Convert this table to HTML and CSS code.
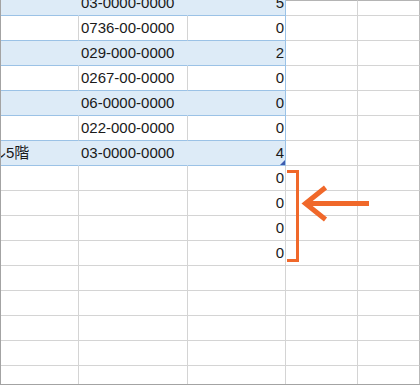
FILE: index.html
```html
<!DOCTYPE html>
<html lang="ja">
<head>
<meta charset="utf-8">
<title>Sheet</title>
<link rel="stylesheet" href="styles.css">
</head>
<body>
<div class="sheet">
  <!-- row 0 (partial, table band) -->
  <div class="c a t band first"></div>
  <div class="c b t band first"><span class="txt">03-0000-0000</span></div>
  <div class="c n t band first"><span class="txt">5</span></div>
  <div class="c d first top"></div>
  <div class="c e first top"></div>
  <!-- row 1 -->
  <div class="c a t"></div>
  <div class="c b t">0736-00-0000</div>
  <div class="c n t">0</div>
  <div class="c d"></div>
  <div class="c e"></div>
  <!-- row 2 -->
  <div class="c a t band"></div>
  <div class="c b t band">029-000-0000</div>
  <div class="c n t band">2</div>
  <div class="c d"></div>
  <div class="c e"></div>
  <!-- row 3 -->
  <div class="c a t"></div>
  <div class="c b t">0267-00-0000</div>
  <div class="c n t">0</div>
  <div class="c d"></div>
  <div class="c e"></div>
  <!-- row 4 -->
  <div class="c a t band"></div>
  <div class="c b t band">06-0000-0000</div>
  <div class="c n t band">0</div>
  <div class="c d"></div>
  <div class="c e"></div>
  <!-- row 5 -->
  <div class="c a t"></div>
  <div class="c b t">022-000-0000</div>
  <div class="c n t">0</div>
  <div class="c d"></div>
  <div class="c e"></div>
  <!-- row 6 -->
  <div class="c a t band"><span class="spill">ル5階</span></div>
  <div class="c b t band">03-0000-0000</div>
  <div class="c n t band handle">4</div>
  <div class="c d"></div>
  <div class="c e"></div>
  <!-- rows below the table -->
  <div class="c a"></div><div class="c b"></div><div class="c n">0</div><div class="c d"></div><div class="c e"></div>
  <div class="c a"></div><div class="c b"></div><div class="c n">0</div><div class="c d"></div><div class="c e"></div>
  <div class="c a"></div><div class="c b"></div><div class="c n">0</div><div class="c d"></div><div class="c e"></div>
  <div class="c a"></div><div class="c b"></div><div class="c n">0</div><div class="c d"></div><div class="c e"></div>
  <div class="c a"></div><div class="c b"></div><div class="c n"></div><div class="c d"></div><div class="c e"></div>
  <div class="c a"></div><div class="c b"></div><div class="c n"></div><div class="c d"></div><div class="c e"></div>
  <div class="c a"></div><div class="c b"></div><div class="c n"></div><div class="c d"></div><div class="c e"></div>
  <div class="c a"></div><div class="c b"></div><div class="c n"></div><div class="c d"></div><div class="c e"></div>
  <div class="c a last"></div><div class="c b last"></div><div class="c n last"></div><div class="c d last"></div><div class="c e last"></div>

  <svg class="marks" width="420" height="385" viewBox="0 0 420 385" aria-hidden="true">
    <polyline points="287,171.5 297.5,171.5 297.5,260.5 287,260.5" fill="none" stroke="#f0682a" stroke-width="3" stroke-linejoin="miter"/>
    <line x1="306" y1="203.5" x2="369" y2="203.5" stroke="#f0682a" stroke-width="5"/>
    <polyline points="325.5,187.5 305.5,203.5 325.5,219.5" fill="none" stroke="#f0682a" stroke-width="5" stroke-linejoin="miter" stroke-miterlimit="10"/>
  </svg>
</div>
</body>
</html>
```
FILE: styles.css
```css
html, body {
  margin: 0;
  padding: 0;
  background: #ffffff;
  overflow: hidden;
}

.sheet {
  position: relative;
  width: 420px;
  height: 385px;
  box-sizing: border-box;
  border-left: 1px solid #a3a3a3;
  border-bottom: 1px solid #a3a3a3;
  display: grid;
  grid-template-columns: 78px 109px 98px 72px 62px;
  grid-template-rows: 16px repeat(14, 25px) 18px;
  font-family: "Liberation Sans", "Noto Sans CJK JP", sans-serif;
  font-size: 15px;
  color: #1a1a1a;
  background: #ffffff;
}

.c {
  box-sizing: border-box;
  border-right: 1px solid #d4d4d4;
  border-bottom: 1px solid #d4d4d4;
  line-height: 24px;
  white-space: nowrap;
  overflow: hidden;
  position: relative;
}

.e {
  border-right-color: #b9b9b9;
}

.b {
  padding-left: 2px;
}

.n {
  text-align: right;
  padding-right: 1px;
}

/* table rows */
.t {
  border-bottom-color: #9bc2e6;
}

.n.t {
  border-right-color: #9bc2e6;
}

.band {
  background: #ddebf7;
}

.a.band,
.b.band {
  border-right-color: #ddebf7;
}

.first {
  display: flex;
  align-items: flex-end;
}

.n.first {
  justify-content: flex-end;
}

.first .txt {
  display: block;
  line-height: 24px;
  flex: none;
}

.top {
  border-top: 1px solid #b4b4b4;
}

.last {
  border-bottom: none;
}

.spill {
  display: inline-block;
  margin-left: -10px;
}

.handle {
  overflow: visible;
}

.handle::after {
  content: "";
  position: absolute;
  right: 0;
  bottom: 0;
  width: 0;
  height: 0;
  border-left: 5px solid transparent;
  border-bottom: 5px solid #3e5cb0;
}

.marks {
  position: absolute;
  left: -1px;
  top: 0;
  pointer-events: none;
}
```
